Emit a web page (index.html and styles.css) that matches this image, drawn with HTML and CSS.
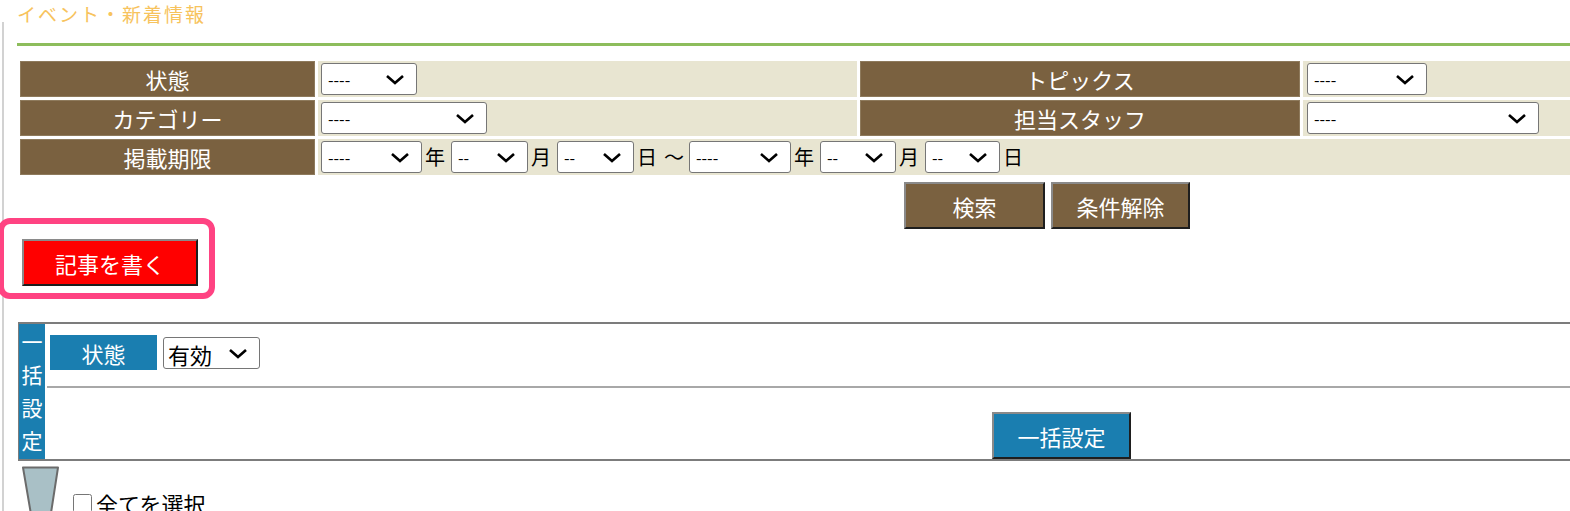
FILE: index.html
```html
<!DOCTYPE html>
<html lang="ja">
<head>
<meta charset="utf-8">
<title>イベント・新着情報</title>
<link rel="stylesheet" href="styles.css">
</head>
<body>
<div class="page">
  <h1 class="title">イベント・新着情報</h1>
  <div class="content">
    <div class="rule"></div>
    <table class="search">
      <colgroup>
        <col class="c1"><col class="c2"><col class="c3"><col class="c4">
      </colgroup>
      <tr>
        <th>状態</th>
        <td><span class="sel s96"><select><option>----</option></select><svg class="chev" width="20" height="11" viewBox="0 0 20 11"><path d="M2 2 L10 9 L18 2" fill="none" stroke="#000" stroke-width="2.6"/></svg></span></td>
        <th>トピックス</th>
        <td class="pad4"><span class="sel s120"><select><option>----</option></select><svg class="chev" width="20" height="11" viewBox="0 0 20 11"><path d="M2 2 L10 9 L18 2" fill="none" stroke="#000" stroke-width="2.6"/></svg></span></td>
      </tr>
      <tr>
        <th>カテゴリー</th>
        <td><span class="sel s166"><select><option>----</option></select><svg class="chev" width="20" height="11" viewBox="0 0 20 11"><path d="M2 2 L10 9 L18 2" fill="none" stroke="#000" stroke-width="2.6"/></svg></span></td>
        <th>担当スタッフ</th>
        <td class="pad4"><span class="sel s232"><select><option>----</option></select><svg class="chev" width="20" height="11" viewBox="0 0 20 11"><path d="M2 2 L10 9 L18 2" fill="none" stroke="#000" stroke-width="2.6"/></svg></span></td>
      </tr>
      <tr>
        <th>掲載期限</th>
        <td colspan="3">
          <div class="dates">
            <span class="sel s101 first"><select><option>----</option></select><svg class="chev" width="20" height="11" viewBox="0 0 20 11"><path d="M2 2 L10 9 L18 2" fill="none" stroke="#000" stroke-width="2.6"/></svg></span><span class="u">年</span>
            <span class="sel s77"><select><option>--</option></select><svg class="chev" width="20" height="11" viewBox="0 0 20 11"><path d="M2 2 L10 9 L18 2" fill="none" stroke="#000" stroke-width="2.6"/></svg></span><span class="u">月</span>
            <span class="sel s77"><select><option>--</option></select><svg class="chev" width="20" height="11" viewBox="0 0 20 11"><path d="M2 2 L10 9 L18 2" fill="none" stroke="#000" stroke-width="2.6"/></svg></span><span class="u">日</span><span class="tilde">〜</span>
            <span class="sel s102 first2"><select><option>----</option></select><svg class="chev" width="20" height="11" viewBox="0 0 20 11"><path d="M2 2 L10 9 L18 2" fill="none" stroke="#000" stroke-width="2.6"/></svg></span><span class="u">年</span>
            <span class="sel s76"><select><option>--</option></select><svg class="chev" width="20" height="11" viewBox="0 0 20 11"><path d="M2 2 L10 9 L18 2" fill="none" stroke="#000" stroke-width="2.6"/></svg></span><span class="u">月</span>
            <span class="sel s75"><select><option>--</option></select><svg class="chev" width="20" height="11" viewBox="0 0 20 11"><path d="M2 2 L10 9 L18 2" fill="none" stroke="#000" stroke-width="2.6"/></svg></span><span class="u">日</span>
          </div>
        </td>
      </tr>
    </table>
    <div class="actions">
      <button class="btn brown w141">検索</button>
      <button class="btn brown w139">条件解除</button>
    </div>
    <div class="write-wrap">
      <button class="btn red">記事を書く</button>
      <div class="highlight"></div>
    </div>
    <div class="bulk">
      <div class="bulk-side">一<br>括<br>設<br>定</div>
      <div class="bulk-main">
        <div class="bulk-row">
          <span class="blue-label">状態</span>
          <span class="sel s97 big"><select><option>有効</option></select><svg class="chev" width="20" height="11" viewBox="0 0 20 11"><path d="M2 2 L10 9 L18 2" fill="none" stroke="#000" stroke-width="2.6"/></svg></span>
        </div>
        <div class="bulk-foot">
          <button class="btn blue">一括設定</button>
        </div>
      </div>
    </div>
    <div class="select-all">
      <svg class="funnel" width="40" height="48" viewBox="0 0 40 48">
        <polygon points="2,1.5 37,1.5 28,60 12,60" fill="#a9c0c6" stroke="#6b6b6b" stroke-width="2" stroke-linejoin="round"/>
      </svg>
      <label class="all"><input type="checkbox">全てを選択</label>
    </div>
  </div>
</div>
</body>
</html>
```

FILE: styles.css
```css
html, body {
  margin: 0;
  padding: 0;
  overflow: hidden;
  background: #fff;
}
body {
  font-family: "Noto Sans CJK JP", "Noto Sans", sans-serif;
  color: #000;
  width: 1570px;
  height: 511px;
}
.page {
  width: 2080px;
}
.title {
  margin: 0;
  height: 17px;
  padding: 4px 0 1px 17px;
  font-size: 19px;
  letter-spacing: 2px;
  line-height: 20px;
  font-weight: normal;
  color: #f7c35d;
}
.content {
  margin-left: 2px;
  border-left: 2px solid #d2d2d2;
  padding-left: 13px;
  padding-top: 21px;
  width: 2060px;
  height: 500px;
}
.rule {
  height: 3px;
  background: #8dbd5c;
  width: 2060px;
}
.search {
  margin-top: 12px;
  border-collapse: separate;
  border-spacing: 3px;
  width: 2061px;
  margin-left: 0;
  table-layout: fixed;
}
.c1 { width: 295px; }
.c2 { width: 539px; }
.c3 { width: 440px; }
.search th {
  background: #7a6140;
  color: #fff;
  font-weight: normal;
  font-size: 22px;
  height: 36px;
  padding: 0;
  text-align: center;
  box-shadow: inset 0 0 0 1px #8e7a5c;
}
.search td {
  background: #e8e5d1;
  height: 36px;
  padding: 0 0 0 3px;
}
.search td.pad4 { padding-left: 4px; }
.sel {
  position: relative;
  display: inline-block;
  vertical-align: middle;
  height: 32px;
}
.sel select {
  -webkit-appearance: none;
  appearance: none;
  width: 100%;
  height: 32px;
  font-family: "Noto Sans CJK JP", "Noto Sans", sans-serif;
  font-size: 16px;
  border: 1px solid #767676;
  border-radius: 3px;
  background: #fff;
  color: #000;
  padding: 0 6px;
  margin: 0;
  display: block;
}
.chev {
  position: absolute;
  right: 12px;
  top: 11px;
  pointer-events: none;
}
.s96 { width: 96px; }
.s120 { width: 120px; }
.s166 { width: 166px; }
.s232 { width: 232px; }
.s101 { width: 101px; }
.s102 { width: 102px; }
.s77 { width: 77px; }
.s76 { width: 76px; }
.s75 { width: 75px; }
.s97 { width: 97px; }
.dates {
  display: flex;
  align-items: center;
  font-size: 20px;
  line-height: 1;
}
.dates .sel { margin-left: 6px; }
.dates .sel.first { margin-left: 0; }
.dates .sel.first2 { margin-left: 5px; }
.u { margin-left: 3px; width: 20px; }
.tilde { margin-left: 7px; width: 20px; }
.actions {
  display: flex;
  justify-content: center;
  gap: 6px;
  margin-top: 4px;
  width: 2060px;
}
.btn {
  font-family: "Noto Sans CJK JP", "Noto Sans", sans-serif;
  font-size: 22px;
  color: #fff;
  height: 47px;
  padding: 0;
  border: 2px solid;
  border-color: #8a8a8a #1e1e1e #1e1e1e #8a8a8a;
  cursor: pointer;
}
.brown { background: #7a6140; }
.w141 { width: 141px; }
.w139 { width: 139px; }
.write-wrap {
  position: relative;
  margin-top: 10px;
  margin-left: 5px;
  height: 47px;
  width: 176px;
}
.red {
  background: #ff0000;
  width: 176px;
}
.highlight {
  position: absolute;
  left: -24px;
  top: -21px;
  width: 205px;
  height: 69px;
  border: 6px solid #ff4382;
  border-radius: 12px;
  pointer-events: none;
}
.bulk {
  display: flex;
  margin-top: 36px;
  margin-left: 1px;
  width: 2057px;
  height: 135px;
  border-top: 2px solid #7c7c7c;
  border-bottom: 2px solid #7c7c7c;
  border-left: 1px solid #7c7c7c;
}
.bulk-side {
  width: 26px;
  background: #1a7eb0;
  color: #fff;
  font-size: 21px;
  line-height: 33px;
  text-align: center;
  padding-top: 1px;
}
.bulk-main {
  flex: 1;
  display: flex;
  flex-direction: column;
  padding-left: 2px;
}
.bulk-row {
  height: 64px;
  display: flex;
  align-items: flex-start;
  padding-top: 11px;
  padding-left: 3px;
  box-sizing: border-box;
  border-bottom: 2px solid #a8a8a8;
  gap: 6px;
}
.blue-label {
  display: flex;
  align-items: center;
  justify-content: center;
  width: 107px;
  height: 35px;
  background: #1a7eb0;
  color: #fff;
  font-size: 22px;
}
.sel.big { margin-top: 2px; }
.sel.big select {
  font-size: 22px;
  padding: 0 4px;
}
.bulk-foot {
  flex: 1;
  display: flex;
  justify-content: center;
  align-items: flex-end;
}
.blue {
  background: #1a7eb0;
  width: 139px;
  height: 47px;
}
.select-all {
  display: flex;
  align-items: flex-start;
  margin-left: 4px;
  margin-top: 5px;
}
.funnel { display: block; }
.all {
  display: flex;
  align-items: center;
  font-size: 22px;
  margin-top: 26px;
  margin-left: 12px;
  line-height: 22px;
}
.all input {
  width: 19px;
  height: 19px;
  margin: 0 4px 0 0;
}
```
